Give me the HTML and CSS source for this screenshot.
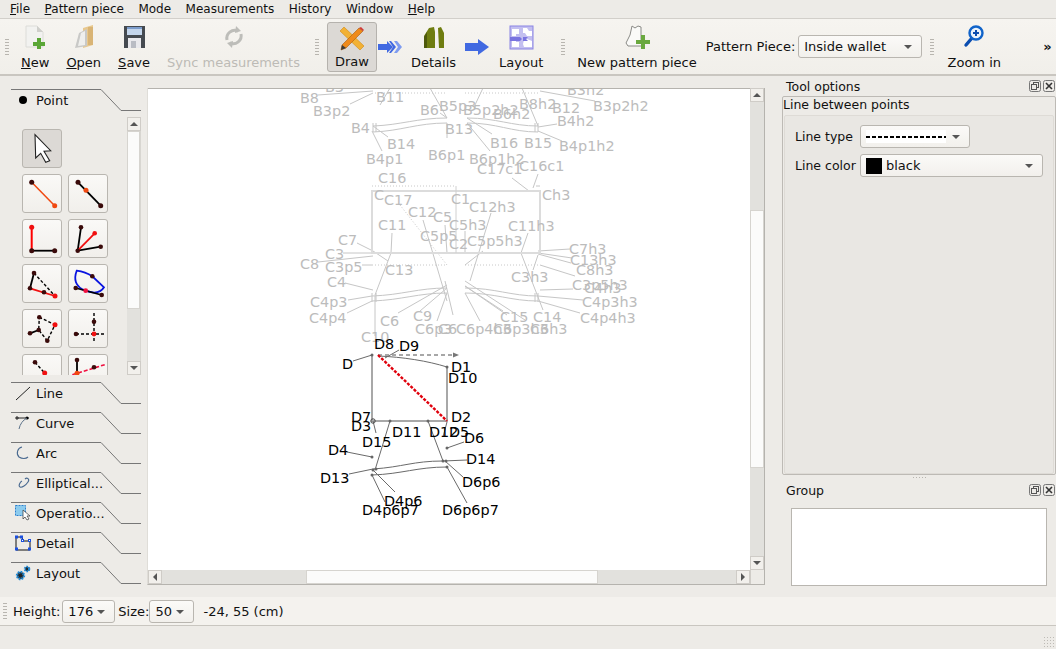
FILE: index.html
```html
<!DOCTYPE html>
<html lang="en">
<head>
    <meta charset="UTF-8">
    <title>Valentina</title>
    <link rel="stylesheet" href="styles.css">
</head>
<body>
<div class="window">
    <nav class="menubar">
        <span><u>F</u>ile</span>
        <span><u>P</u>attern piece</span>
        <span>Mode</span>
        <span>Measurements</span>
        <span>History</span>
        <span>Window</span>
        <span><u>H</u>elp</span>
    </nav>

    <header class="toolbar">
        <div class="handle"></div>
        <div class="tool-btn">
            <svg width="24" height="24" viewBox="0 0 24 24"><path d="M3 1h11l6 6v15H3z" fill="#f2f2f0" stroke="#dcdcd8"/><path d="M14 1v6h6z" fill="#cfcfcb"/><path d="M14 13h4v4h4v4h-4v3h-4v-3h-4v-4h4z" fill="#5aa636"/></svg>
            <span><u>N</u>ew</span>
        </div>
        <div class="tool-btn">
            <svg width="24" height="24" viewBox="0 0 24 24"><path d="M11 3l10-3v20l-10 3z" fill="#e8c88e"/><path d="M16 2h5v18h-5z" fill="#d9b475"/><path d="M7 8l8-4v17l-12 2z" fill="#c9c9c7"/><path d="M9 8l4-2v14l-7 1z" fill="#efefed"/></svg>
            <span><u>O</u>pen</span>
        </div>
        <div class="tool-btn">
            <svg width="24" height="24" viewBox="0 0 24 24"><rect x="2" y="1" width="21" height="22" fill="#454a50"/><rect x="5" y="2" width="15" height="8" fill="#c4d6ec"/><rect x="5" y="2" width="15" height="2" fill="#7c9ccb"/><path d="M6 13h13v10H6z" fill="#e9e9ed"/><path d="M9 16h5v7H9z" fill="#b9bcc4"/></svg>
            <span><u>S</u>ave</span>
        </div>
        <div class="tool-btn disabled">
            <svg width="24" height="24" viewBox="0 0 24 24" fill="none" stroke="#bdbdb9" stroke-width="3"><path d="M5 15a8 8 0 0 1 11-9"/><path d="M19 9a8 8 0 0 1-11 9"/><path d="M14 1l5 5-6 2z" fill="#bdbdb9" stroke="none"/><path d="M10 23l-5-5 6-2z" fill="#bdbdb9" stroke="none"/></svg>
            <span>Sync measurements</span>
        </div>
        <div class="handle handle-gap"></div>
        <div class="tool-btn active">
            <svg width="26" height="25" viewBox="0 0 26 25"><path d="M1 5l4-4 20 19-4 4z" fill="#f2b134" stroke="#d08a18" stroke-width=".6"/><path d="M20 2l4 3L7 22l-5 2 1-5z" fill="#ef8a1a" stroke="#a85c10" stroke-width=".6"/><path d="M20 2l4 3 1-1-3-3z" fill="#d03838"/><path d="M3 19l4 3-5 2z" fill="#3a3a3a"/></svg>
            <span>Draw</span>
        </div>
        <svg class="flow-arrow first-arrow" width="24" height="12" viewBox="0 0 24 12"><path d="M0 3h9V0l6 6-6 6V9H0z" fill="#4169e1"/><path d="M11 0h2l5 6-5 6h-2l4-6z" fill="#4169e1"/><path d="M16 0h3l5 6-5 6h-3l4-6z" fill="#7f9cf0"/></svg>
        <div class="tool-btn">
            <svg width="24" height="24" viewBox="0 0 24 24"><path d="M2 23V11l5-8 5-1 1 5v16z" fill="#6f7d10"/><path d="M16 3l3-1 3 6v15h-5z" fill="#6f7d10"/><path d="M2 23V12l3-5v16z" fill="#4d590c"/></svg>
            <span>Details</span>
        </div>
        <svg class="flow-arrow" width="24" height="16" viewBox="0 0 24 16"><path d="M0 4h13V0l11 8-11 8v-4H0z" fill="#4169e1"/></svg>
        <div class="tool-btn">
            <svg width="25" height="25" viewBox="0 0 25 25"><rect x="1" y="1" width="23" height="23" fill="#c3bff0" stroke="#8a84e4"/><path d="M3 4h7v5H7v2H3zM14 3h4l2 3h3v5h-5l-2-3h-2zM3 15h4v2h3v5H3zM15 15l3-1 5 2v6h-8l-1-3z" fill="#fff"/><path d="M1 12h10l2 2-2 2H1zM14 12h5l-2 2 2 2h-5z" fill="#7a74e0"/></svg>
            <span>Layout</span>
        </div>
        <div class="handle handle-gap-s"></div>
        <div class="tool-btn wide">
            <svg width="26" height="25" viewBox="0 0 26 25"><path d="M8 1l3 2 3-2 3 1v12l1 7H4l-2-3 4-8z" fill="#fafaf8" stroke="#8a8a86"/><path d="M17 10h4v5h5v4h-5v5h-4v-5h-5v-4h5z" fill="#6aa83e"/></svg>
            <span>New pattern piece</span>
        </div>
        <label class="piece-label">Pattern Piece:</label>
        <div class="combo piece-combo"><span>Inside wallet</span><i class="caret"></i></div>
        <div class="handle handle-gap-xs"></div>
        <div class="tool-btn zoom-btn">
            <svg width="24" height="24" viewBox="0 0 24 24"><path d="M10 13l-6 7" stroke="#0b4db0" stroke-width="3.4" stroke-linecap="round"/><circle cx="14" cy="8" r="6.5" fill="#eaf2fb" stroke="#1063c9" stroke-width="2.4"/><path d="M11 8h6M14 5v6" stroke="#0b4db0" stroke-width="2"/></svg>
            <span>Zoom in</span>
        </div>
        <span class="more">»</span>
    </header>

    <main class="main">
        <aside class="toolbox">
            <div class="tab open">
                <svg class="notch" width="130" height="22" viewBox="0 0 130 22"><path d="M0 .5h90l20 21h20"/></svg>
                <svg class="tab-icon" width="16" height="16" viewBox="0 0 16 16"><circle cx="8" cy="8" r="4" fill="#000"/></svg>
                <span>Point</span>
            </div>
            <div class="tools">
                <div class="tool-grid">
                    <div class="tool selected">
                        <svg width="38" height="37" viewBox="0 0 38 37"><path d="M12 4.700L27.700 20.700 21 21.300 26.700 30.700 22.700 32.300 17.700 23.300 12.700 28z" fill="#fff" stroke="#222" stroke-width="1.100"/></svg>
                    </div>
                    <div class="tool-spacer"></div>
                    <div class="tool">
                        <svg width="38" height="37" viewBox="0 0 38 37"><path d="M8.700 7.300l23 23.400" stroke="#f04810" stroke-width="1.500"/><circle cx="8.700" cy="7.300" r="2.500" fill="#3a0a0a"/><circle cx="31.700" cy="30.700" r="2.500" fill="#f04810"/></svg>
                    </div>
                    <div class="tool">
                        <svg width="38" height="37" viewBox="0 0 38 37"><path d="M9 7.300l22.700 23.400" stroke="#000" stroke-width="1.800"/><circle cx="9" cy="7.300" r="2.500" fill="#3a0a0a"/><circle cx="17" cy="15.300" r="2.500" fill="#f04810"/><circle cx="31.700" cy="30.700" r="2.500" fill="#3a0a0a"/></svg>
                    </div>
                    <div class="tool">
                        <svg width="38" height="37" viewBox="0 0 38 37"><path d="M8.700 30.700h23" stroke="#000" stroke-width="1.800"/><path d="M8.700 30.700V7.300" stroke="#f00" stroke-width="2"/><circle cx="8.700" cy="7.300" r="2.500" fill="#f01010"/><circle cx="8.700" cy="30.700" r="2.500" fill="#3a0a0a"/><circle cx="31.700" cy="30.700" r="2.500" fill="#3a0a0a"/></svg>
                    </div>
                    <div class="tool">
                        <svg width="38" height="37" viewBox="0 0 38 37"><path d="M8.700 30.700L12 7.300M8.700 30.700l23-4" stroke="#000" stroke-width="1.800"/><path d="M8.700 30.700l17-17.400" stroke="#f01010" stroke-width="1.800"/><circle cx="12" cy="7.300" r="2.300" fill="#3a0a0a"/><circle cx="25.700" cy="13.300" r="2.300" fill="#f01010"/><circle cx="31.700" cy="26.700" r="2.300" fill="#3a0a0a"/><circle cx="8.700" cy="30.700" r="2.300" fill="#3a0a0a"/></svg>
                    </div>
                    <div class="tool">
                        <svg width="38" height="37" viewBox="0 0 38 37"><path d="M11 8L7 23.300" stroke="#000" stroke-width="1.800"/><path d="M11 8l21 23" stroke="#000" stroke-width="1.400" stroke-dasharray="3 2"/><path d="M7 23.300L32 31" stroke="#f01010" stroke-width="1.800"/><circle cx="11" cy="8" r="2.300" fill="#3a0a0a"/><circle cx="7" cy="23.300" r="2.300" fill="#3a0a0a"/><circle cx="21" cy="27.300" r="2.300" fill="#3a0a0a"/><circle cx="32" cy="31" r="2.500" fill="#f01010"/></svg>
                    </div>
                    <div class="tool">
                        <svg width="38" height="37" viewBox="0 0 38 37"><path d="M7.700 5.700c-3 8-2 16 9 20 8 3 15 2 18.300-3.400L23.300 11.300C18 8 13 6.500 7.700 5.700z" fill="none" stroke="#0a14e0" stroke-width="1.800"/><path d="M6.700 23l26 7" stroke="#000" stroke-width="1.800"/><circle cx="23.300" cy="11.300" r="2.300" fill="#3a0a0a"/><circle cx="6.700" cy="23" r="2.300" fill="#3a0a0a"/><circle cx="16.700" cy="25.700" r="2.400" fill="#f01040"/><circle cx="32.700" cy="30" r="2.300" fill="#3a0a0a"/></svg>
                    </div>
                    <div class="tool">
                        <svg width="38" height="37" viewBox="0 0 38 37"><path d="M7 23.300L15.700 20" stroke="#000" stroke-width="1.800"/><path d="M16.300 7.300L32 14.700 24.300 30.700 15.700 20z" fill="none" stroke="#000" stroke-width="1.400" stroke-dasharray="3 2"/><circle cx="16.300" cy="7.300" r="2.300" fill="#3a0a0a"/><circle cx="7" cy="23.300" r="2.300" fill="#3a0a0a"/><circle cx="15.700" cy="20" r="2.300" fill="#3a0a0a"/><circle cx="32" cy="14.700" r="2.500" fill="#f01010"/><circle cx="24.300" cy="30.700" r="2.300" fill="#3a0a0a"/></svg>
                    </div>
                    <div class="tool">
                        <svg width="38" height="37" viewBox="0 0 38 37"><path d="M25 3v30M7 24h28" stroke="#000" stroke-width="1.400" stroke-dasharray="3 2"/><circle cx="25" cy="11.700" r="2.300" fill="#3a0a0a"/><circle cx="7" cy="24" r="2.300" fill="#3a0a0a"/><circle cx="25" cy="24" r="2.400" fill="#f01010"/></svg>
                    </div>
                    <div class="tool">
                        <svg width="38" height="37" viewBox="0 0 38 37"><path d="M12 7.300l10 11" stroke="#000" stroke-width="1.400" stroke-dasharray="3 2"/><circle cx="12" cy="7.300" r="2.300" fill="#3a0a0a"/><circle cx="21.700" cy="18" r="2.500" fill="#f01010"/><circle cx="15" cy="22" r="2" fill="#f01010"/></svg>
                    </div>
                    <div class="tool">
                        <svg width="38" height="37" viewBox="0 0 38 37"><path d="M8 5v13.300" stroke="#000" stroke-width="1.800"/><path d="M3.300 19.700l32.400-10" stroke="#f01040" stroke-width="1.600" stroke-dasharray="4 2"/><circle cx="8" cy="5" r="2.300" fill="#3a0a0a"/><circle cx="25" cy="12.300" r="2.300" fill="#3a0a0a"/><circle cx="8" cy="18.300" r="2.500" fill="#f04810"/></svg>
                    </div>
                </div>
                <div class="vscroll small-scroll">
                    <div class="arrow-btn"><i class="tri up"></i></div>
                    <div class="thumb toolbox-thumb"></div>
                    <div class="track"></div>
                    <div class="arrow-btn"><i class="tri down"></i></div>
                </div>
            </div>
            <div class="tab">
                <svg class="notch" width="130" height="22" viewBox="0 0 130 22"><path d="M0 .5h90l20 21h20"/></svg>
                <svg class="tab-icon" width="16" height="16" viewBox="0 0 16 16"><path d="M1 15L15 2" stroke="#222" fill="none"/></svg>
                <span>Line</span>
            </div>
            <div class="tab">
                <svg class="notch" width="130" height="22" viewBox="0 0 130 22"><path d="M0 .5h90l20 21h20"/></svg>
                <svg class="tab-icon" width="16" height="16" viewBox="0 0 16 16"><path d="M1 3h13" stroke="#222" fill="none"/><circle cx="2" cy="3" r="1.200" fill="none" stroke="#222"/><circle cx="12" cy="3" r="1.500"/><path d="M4 14C5 9 8 5 12 3" stroke="#5a7088" fill="none"/></svg>
                <span>Curve</span>
            </div>
            <div class="tab">
                <svg class="notch" width="130" height="22" viewBox="0 0 130 22"><path d="M0 .5h90l20 21h20"/></svg>
                <svg class="tab-icon" width="16" height="16" viewBox="0 0 16 16"><path d="M7 2A6 6 0 0 0 4 12c3 2 7 2 9 0" stroke="#4a6a90" stroke-width="1.100" fill="none"/></svg>
                <span>Arc</span>
            </div>
            <div class="tab">
                <svg class="notch" width="130" height="22" viewBox="0 0 130 22"><path d="M0 .5h90l20 21h20"/></svg>
                <svg class="tab-icon" width="16" height="16" viewBox="0 0 16 16"><path d="M10 4c2-2 5 0 3 3-2 3-6 6-8 5s0-5 2-6" stroke="#4a6a90" stroke-width="1.100" fill="none"/></svg>
                <span>Elliptical...</span>
            </div>
            <div class="tab">
                <svg class="notch" width="130" height="22" viewBox="0 0 130 22"><path d="M0 .5h90l20 21h20"/></svg>
                <svg class="tab-icon" width="16" height="16" viewBox="0 0 16 16"><rect x=".5" y=".5" width="10" height="10" fill="#8ccbee" stroke="#2a80d0" stroke-dasharray="2 1"/><path d="M8 5v9l2-2 2 3 2-1-2-3h3z" fill="#fff" stroke="#333" stroke-width=".7"/></svg>
                <span>Operatio...</span>
            </div>
            <div class="tab">
                <svg class="notch" width="130" height="22" viewBox="0 0 130 22"><path d="M0 .5h90l20 21h20"/></svg>
                <svg class="tab-icon" width="16" height="16" viewBox="0 0 16 16"><path d="M1 2h6l1 4h7v9H1z" fill="none" stroke="#111"/><g fill="#fff" stroke="#1a50e0"><rect x=".5" y="1" width="2" height="2"/><rect x="5.500" y="1" width="2" height="2"/><rect x="6.500" y="4.500" width="2" height="2"/><rect x="13.500" y="4.500" width="2" height="2"/><rect x="13.500" y="13" width="2" height="2"/><rect x=".5" y="13" width="2" height="2"/></g></svg>
                <span>Detail</span>
            </div>
            <div class="tab">
                <svg class="notch" width="130" height="22" viewBox="0 0 130 22"><path d="M0 .5h90l20 21h20"/></svg>
                <svg class="tab-icon" width="16" height="16" viewBox="0 0 16 16"><circle cx="5.500" cy="10.500" r="3.400" fill="#222" stroke="#1c8ad8" stroke-width="2.600" stroke-dasharray="1.600 1"/><circle cx="12" cy="4" r="2.200" fill="#222" stroke="#1c8ad8" stroke-width="2.200" stroke-dasharray="1.400 .8"/></svg>
                <span>Layout</span>
            </div>
        </aside>

        <section class="scene">
            <div class="scene-row">
                <div class="canvas">
                    <svg class="drawing" width="602" height="482" viewBox="148 88 602 482">
                        <g class="old-lines">
                            <path d="M318 95l55-4M350 104l23-11M380 105l10-17M388 137l-15-11M382 151l-10-20M440 113l7 5M447 138v-15M430 88l17 30M492 134l-25-16M490 151l-23-28M538 126l-16-38M557 124l-19 3M562 141l-24-10M595 101l-55-10M483 88l-8 17"/>
                            <path d="M373 126c28-1 44-8 74-8M373 132c28-1 44-9 74-9M467 118c30 0 44 8 71 8M467 123c30 0 44 9 71 9M373 123v9M376 123v9M535 123v9M538 123v9"/>
                            <path d="M512 178l17 13M538 174l-5 14M536 186h4"/>
                            <path d="M357 243l16 8M343 253h29M318 262l55-6M362 265h10M388 261l-15-10M392 233l-1 20M375 336v-40M375 295l16-42M345 283l28 7M348 300l24-4M347 313l25-12M423 220l24 81M445 225l2 28M465 231v22M483 251l-18 14M491 213l-21 68M528 233l-7 20M521 253l22 57M538 255l-5 15M570 249l-32 2M572 258l-34-5M571 263l-33-9M575 276l-35-11M573 289l-33 1M583 300l-45-4M580 313l-42-12M398 313l49-28M420 311l27-23M437 321l10-28M453 315l-8-34M480 321l-15-28M507 315l-42-29M525 320l-60-39M503 311l-38-25"/>
                            <path d="M372 296c30-1 46-8 75-8M372 301c30-1 46-8 75-8M465 288c30 0 46 8 73 8M465 293c30 0 46 8 73 8M372 293v9M376 293v9M535 293v9M538 293v9"/>
                        </g>
                        <g class="old-dots">
                            <path d="M375 93h72M465 93h73M372 186h84M400 205l47 60M372 265h75M465 265h75"/>
                        </g>
                        <path class="old-rect" d="M372 191h168v62H372z"/>
                        <path class="old-mid" d="M456 186v67"/>
                        <g class="old-labels">
                            <text x="325" y="92">B3</text><text x="300" y="103">B8</text><text x="313" y="116">B3p2</text><text x="376" y="102">B11</text><text x="420" y="115">B6</text><text x="439" y="111">B5p3</text><text x="463" y="115">B5p2h2</text><text x="493" y="119">B6h2</text><text x="519" y="109">B8h2</text><text x="552" y="113">B12</text><text x="593" y="111">B3p2h2</text><text x="567" y="95">B3h2</text>
                            <text x="351" y="133">B4</text><text x="445" y="134">B13</text><text x="557" y="126">B4h2</text><text x="387" y="149">B14</text><text x="428" y="160">B6p1</text><text x="490" y="148">B16</text><text x="524" y="148">B15</text><text x="559" y="151">B4p1h2</text><text x="366" y="164">B4p1</text><text x="469" y="164">B6p1h2</text>
                            <text x="477" y="174">C17c1</text><text x="519" y="171">C16c1</text><text x="378" y="183">C16</text><text x="542" y="200">Ch3</text><text x="374" y="200">C</text><text x="384" y="205">C17</text><text x="408" y="217">C12</text><text x="433" y="222">C5</text><text x="451" y="204">C1</text><text x="469" y="212">C12h3</text>
                            <text x="449" y="230">C5h3</text><text x="378" y="230">C11</text><text x="508" y="231">C11h3</text><text x="420" y="241">C5p5</text><text x="449" y="249">C2</text><text x="467" y="246">C5p5h3</text><text x="338" y="245">C7</text><text x="325" y="259">C3</text><text x="300" y="269">C8</text><text x="325" y="272">C3p5</text><text x="385" y="275">C13</text>
                            <text x="569" y="254">C7h3</text><text x="570" y="265">C13h3</text><text x="576" y="275">C8h3</text><text x="511" y="282">C3h3</text><text x="572" y="290">C3p5h3</text><text x="584" y="293">C4h3</text><text x="327" y="287">C4</text><text x="310" y="307">C4p3</text><text x="582" y="307">C4p3h3</text><text x="309" y="323">C4p4</text><text x="580" y="323">C4p4h3</text>
                            <text x="380" y="326">C6</text><text x="413" y="321">C9</text><text x="500" y="322">C15</text><text x="533" y="322">C14</text><text x="415" y="334">C6p3</text><text x="438" y="334">C6</text><text x="456" y="334">C6p4h3</text><text x="493" y="334">C6p3h3</text><text x="530" y="334">C6h3</text><text x="361" y="342">C10</text>
                        </g>
                        <g class="new-thick"><path d="M372 355v66h75v-54"/></g>
                        <g class="new-lines">
                            <path d="M353 361l19-6M378 356c25 1 50 5 69 11M385 358l14-8"/>
                            <path d="M390 421l-15 49M428 421l15 40M373 421l3 12M464 442l-17 6M347 452l25 5M467 460l-24 1M349 474l24-5M463 477l-18-16M395 492l-22-22M385 502l-13-27M467 503l-20-36M443 437l4-15"/>
                            <path d="M373 469c30-2 40-8 70-8M372 475c30-1 45-8 75-8"/>
                            <circle cx="373" cy="421" r="2.200" class="ring"/><circle cx="372" cy="355" r="1.500"/><circle cx="447" cy="367" r="1.500"/><circle cx="390" cy="421" r="1.500"/><circle cx="428" cy="421" r="1.500"/><circle cx="443" cy="461" r="1.500"/><circle cx="446" cy="461" r="1.500"/><circle cx="373" cy="470" r="1.500"/><circle cx="376" cy="469" r="1.500"/><circle cx="372" cy="475" r="1.500"/><circle cx="447" cy="467" r="1.500"/><circle cx="372" cy="457" r="1.500"/><circle cx="447" cy="448" r="1.500"/>
                        </g>
                        <path class="new-dash" d="M378 355h76"/>
                        <path class="arrow-head" d="M459 355l-6-2.500v5z"/>
                        <path class="new-red" d="M378 355l69 66"/>
                        <g class="new-labels">
                            <text x="374" y="349">D8</text><text x="399" y="351">D9</text><text x="342" y="369">D</text><text x="451" y="372">D1</text><text x="448" y="383">D10</text><text x="351" y="422">D7</text><text x="351" y="431">D3</text><text x="451" y="422">D2</text><text x="392" y="437">D11</text><text x="429" y="437">D12</text><text x="449" y="437">D5</text><text x="464" y="443">D6</text><text x="362" y="447">D15</text><text x="328" y="455">D4</text><text x="466" y="464">D14</text><text x="320" y="483">D13</text><text x="462" y="487">D6p6</text><text x="384" y="506">D4p6</text><text x="362" y="515">D4p6p7</text><text x="442" y="515">D6p6p7</text>
                        </g>
                    </svg>
                </div>
                <div class="vscroll main-v">
                    <div class="arrow-btn"><i class="tri up"></i></div>
                    <div class="track v-before"></div>
                    <div class="thumb v-thumb"></div>
                    <div class="track"></div>
                    <div class="arrow-btn"><i class="tri down"></i></div>
                </div>
            </div>
            <div class="hscroll">
                <div class="arrow-btn"><i class="tri left"></i></div>
                <div class="track h-before"></div>
                <div class="thumb h-thumb"></div>
                <div class="track"></div>
                <div class="arrow-btn"><i class="tri right"></i></div>
                <div class="corner"></div>
            </div>
        </section>

        <aside class="docks">
            <div class="dock-title">
                <span>Tool options</span>
                <div class="dock-btns">
                    <svg width="12" height="12" viewBox="0 0 12 12"><rect x=".5" y=".5" width="11" height="11" rx="2" fill="none" stroke="#777"/><rect x="4.500" y="2.500" width="5" height="5" fill="none" stroke="#555"/><rect x="2.500" y="4.500" width="5" height="5" fill="#edebe7" stroke="#555"/></svg>
                    <svg width="12" height="12" viewBox="0 0 12 12"><rect x=".5" y=".5" width="11" height="11" rx="2" fill="none" stroke="#777"/><path d="M3 3l6 6M9 3l-6 6" stroke="#333" stroke-width="1.600"/></svg>
                </div>
            </div>
            <div class="options-frame">
                <div class="options-title">Line between points</div>
                <div class="options-body">
                    <div class="form-row">
                        <label>Line type</label>
                        <div class="combo type-combo"><span class="dash-sample"></span><i class="caret"></i></div>
                    </div>
                    <div class="form-row">
                        <label>Line color</label>
                        <div class="combo color-combo"><span class="swatch"></span><span>black</span><i class="caret"></i></div>
                    </div>
                </div>
            </div>
            <div class="dock-grip"></div>
            <div class="dock-title group-title">
                <span>Group</span>
                <div class="dock-btns">
                    <svg width="12" height="12" viewBox="0 0 12 12"><rect x=".5" y=".5" width="11" height="11" rx="2" fill="none" stroke="#777"/><rect x="4.500" y="2.500" width="5" height="5" fill="none" stroke="#555"/><rect x="2.500" y="4.500" width="5" height="5" fill="#edebe7" stroke="#555"/></svg>
                    <svg width="12" height="12" viewBox="0 0 12 12"><rect x=".5" y=".5" width="11" height="11" rx="2" fill="none" stroke="#777"/><path d="M3 3l6 6M9 3l-6 6" stroke="#333" stroke-width="1.600"/></svg>
                </div>
            </div>
            <div class="group-list"></div>
        </aside>
    </main>

    <div class="size-bar">
        <div class="handle size-handle"></div>
        <span>Height:</span>
        <div class="combo height-combo"><span>176</span><i class="caret"></i></div>
        <span>Size:</span>
        <div class="combo size-combo"><span>50</span><i class="caret"></i></div>
        <span class="coords">-24, 55 (cm)</span>
    </div>
    <footer class="statusbar"><div class="size-grip"></div></footer>
</div>
</body>
</html>
```

FILE: styles.css
```css
* {
    box-sizing: border-box;
}
html, body {
    margin: 0;
    padding: 0;
}
body {
    width: 1056px;
    height: 649px;
    overflow: hidden;
    background-color: #edebe7;
    color: #111;
    font-family: "DejaVu Sans", sans-serif;
    font-size: 13px;
}
.window {
    display: flex;
    flex-direction: column;
    height: 649px;
}

/* menu */
.menubar {
    display: flex;
    gap: 14.5px;
    height: 19px;
    padding-left: 10px;
    align-items: center;
    border-bottom: 1px solid #d2cfca;
    font-size: 12px;
}

/* main toolbar */
.toolbar {
    display: flex;
    height: 57px;
    align-items: center;
    padding-left: 5px;
    background: linear-gradient(#f6f4f0, #f1efea);
    border-bottom: 2px solid #c9c6c0;
}
.handle {
    width: 4px;
    height: 18px;
    flex: none;
    background-image: radial-gradient(#b8b5af 0.7px, transparent 0.8px);
    background-size: 2px 3px;
}
.handle-gap {
    margin: 0 8px 0 7px;
}
.handle-gap-s {
    margin: 0 0 0 10px;
}
.handle-gap-xs {
    margin: 0 5px 0 8px;
}
.tool-btn {
    display: flex;
    flex-direction: column;
    align-items: center;
    justify-content: space-between;
    height: 50px;
    padding: 3px 8px 2px;
    margin-left: 1px;
    flex: none;
}
.tool-btn svg {
    flex: none;
}
.toolbar > .handle + .tool-btn {
    margin-left: 4px;
}
.tool-btn.disabled {
    color: #bdbbb6;
}
.tool-btn.active {
    width: 50px;
    padding-left: 0;
    padding-right: 0;
    margin-left: 0 !important;
    background-color: #dcd9d5;
    border: 1px solid #b5b2ad;
    border-radius: 3px;
}
.flow-arrow {
    flex: none;
    margin: 0 1px;
}
.first-arrow {
    margin-right: 0;
}
.piece-label {
    margin: 0 3px 0 1px;
    white-space: nowrap;
}
.combo {
    display: flex;
    align-items: center;
    position: relative;
    height: 23px;
    padding-left: 5px;
    background: linear-gradient(#fbfaf8, #f2f0ec);
    border: 1px solid #b9b6b0;
    border-radius: 3px;
    flex: none;
}
.caret {
    position: absolute;
    right: 9px;
    top: 9px;
    width: 0;
    height: 0;
    border-left: 4px solid transparent;
    border-right: 4px solid transparent;
    border-top: 4px solid #555;
}
.piece-combo {
    width: 124px;
}
.zoom-btn {
    width: 70px;
    padding-left: 0;
    padding-right: 0;
    margin-left: 0 !important;
}
.more {
    margin-left: 34px;
    font-size: 13px;
    font-weight: bold;
}

/* left toolbox */
.main {
    display: flex;
    height: 521px;
    flex: none;
}
.toolbox {
    width: 147px;
    flex: none;
    padding: 13px 6px 0 11px;
}
.tab {
    position: relative;
    display: flex;
    align-items: center;
    height: 30px;
    padding: 0 0 8px 4px;
    gap: 5px;
}
.tab.open {
    height: 28px;
    padding-bottom: 6px;
}
.notch {
    position: absolute;
    left: 0;
    top: 0;
    fill: none;
    stroke: #777;
}
.tab-icon {
    flex: none;
}
.tools {
    display: flex;
    height: 258px;
    margin-bottom: 7px;
    overflow: hidden;
}
.tool-grid {
    display: grid;
    grid-template-columns: 40px 40px;
    grid-auto-rows: 39px;
    gap: 6px;
    width: 116px;
    height: 258px;
    padding: 12px 0 0 11px;
    overflow: hidden;
}
.tool {
    display: flex;
    background: linear-gradient(#faf9f7, #f1efeb);
    border: 1px solid #b9b6b0;
    border-radius: 3px;
}
.tool svg {
    flex: none;
}
.tool.selected {
    background: #dcd9d5;
}

/* scrollbars */
.vscroll {
    display: flex;
    flex-direction: column;
    width: 14px;
    flex: none;
}
.small-scroll {
    border-right: 1px solid #d8d6d1;
}
.arrow-btn {
    display: flex;
    align-items: center;
    justify-content: center;
    width: 14px;
    height: 14px;
    flex: none;
    background-color: #f2f0ec;
    border: 1px solid #cfccc7;
}
.track {
    flex: 1;
    background-color: #e2e1dd;
}
.thumb {
    flex: none;
    background-color: #fbfbfa;
    border: 1px solid #d6d4cf;
}
.toolbox-thumb {
    height: 178px;
}
.tri {
    width: 0;
    height: 0;
    border: 4px solid transparent;
}
.tri.up {
    border-top: 0;
    border-bottom: 4px solid #555;
}
.tri.down {
    border-bottom: 0;
    border-top: 4px solid #555;
}
.tri.left {
    border-left: 0;
    border-right: 4px solid #555;
}
.tri.right {
    border-right: 0;
    border-left: 4px solid #555;
}

/* drawing area */
.scene {
    display: flex;
    flex-direction: column;
    width: 618px;
    height: 497px;
    margin-top: 12px;
    flex: none;
    border-right: 1px solid #b5b3ae;
    border-bottom: 1px solid #b5b3ae;
    border-left: 1px solid #dfddd8;
}
.scene-row {
    display: flex;
    height: 482px;
}
.canvas {
    width: 602px;
    height: 482px;
    background-color: #fff;
    border-top: 1px solid #b5b3ae;
    overflow: hidden;
}
.drawing {
    display: block;
    margin-top: -1px;
    font-family: "DejaVu Sans", sans-serif;
    font-size: 14.4px;
}
.old-lines path {
    fill: none;
    stroke: #c6c6c6;
    stroke-width: 1;
}
.old-dots path {
    fill: none;
    stroke: #c8c8c8;
    stroke-width: 1;
    stroke-dasharray: 1 2;
}
.old-rect {
    fill: none;
    stroke: #dcdcdc;
    stroke-width: 2;
}
.old-mid {
    fill: none;
    stroke: #d0d0d0;
    stroke-width: 1;
}
.old-labels {
    fill: #bcbcbc;
}
.new-thick path {
    fill: none;
    stroke: #a8a8a8;
    stroke-width: 2;
}
.new-lines path {
    fill: none;
    stroke: #6a6a6a;
    stroke-width: 1;
}
.new-lines circle {
    fill: #666;
}
.new-lines .ring {
    fill: none;
    stroke: #444;
}
.new-dash {
    fill: none;
    stroke: #8a8a8a;
    stroke-width: 1.3;
    stroke-dasharray: 4 3;
}
.arrow-head {
    fill: #777;
}
.new-red {
    fill: none;
    stroke: #e0000c;
    stroke-width: 2.4;
    stroke-dasharray: 3 1.5;
}
.new-labels {
    fill: #000;
}
.main-v {
    height: 482px;
}
.v-before {
    flex: none;
    height: 108px;
}
.v-thumb {
    height: 258px;
}
.hscroll {
    display: flex;
    height: 14px;
}
.h-before {
    flex: none;
    width: 144px;
}
.h-thumb {
    width: 292px;
}
.corner {
    width: 14px;
    flex: none;
    background-color: #edebe7;
    border-left: 1px solid #cfccc7;
}

/* right docks */
.docks {
    width: 274px;
    margin-left: 17px;
    flex: none;
    display: flex;
    flex-direction: column;
}
.dock-title {
    display: flex;
    justify-content: space-between;
    align-items: center;
    height: 20px;
    padding: 0 1px 0 4px;
    font-size: 12.5px;
}
.options-frame {
    height: 379px;
    border: 1px solid #bdbab5;
    border-radius: 2px;
    display: flex;
    flex-direction: column;
}
.dock-btns {
    display: flex;
    gap: 2px;
}
.options-title {
    height: 18px;
    line-height: 16px;
    font-size: 12.5px;
}
.options-body {
    flex: 1;
    margin: 0 1px;
    padding: 9px 0 0 10px;
    background-color: #e9e7e3;
    border: 1px solid #dedbd6;
    border-radius: 2px;
}
.form-row {
    display: flex;
    align-items: center;
    margin-bottom: 6px;
}
.form-row label {
    width: 65px;
    flex: none;
    font-size: 12.5px;
}
.type-combo {
    width: 110px;
}
.dash-sample {
    display: block;
    width: 80px;
    height: 13px;
    background: #fff linear-gradient(90deg, #000 60%, transparent 60%) 0 50% / 6px 2px repeat-x;
}
.color-combo {
    width: 183px;
    gap: 4px;
}
.swatch {
    width: 16px;
    height: 16px;
    background-color: #000;
}
.dock-grip {
    height: 4px;
    margin: 1px auto 0;
    width: 14px;
    background-image: radial-gradient(#b8b5af 0.6px, transparent 0.7px);
    background-size: 3px 3px;
}
.group-list {
    width: 256px;
    height: 78px;
    margin: 8px 0 0 9px;
    background-color: #fff;
    border: 1px solid #b9b6b0;
}

/* bottom bars */
.size-bar {
    display: flex;
    align-items: center;
    height: 29px;
    flex: none;
    padding-left: 3px;
    background-color: #f4f2ee;
    border-bottom: 1px solid #c9c6c0;
}
.size-handle {
    margin-right: 6px;
}
.height-combo {
    width: 53px;
    margin: 0 3px 0 2px;
}
.size-combo {
    width: 45px;
    margin: 0 9px 0 0;
}
.statusbar {
    flex: 1;
    position: relative;
}
.size-grip {
    position: absolute;
    right: 1px;
    bottom: 1px;
    width: 12px;
    height: 12px;
    background-image: radial-gradient(#bdbab5 0.7px, transparent 0.8px);
    background-size: 3px 3px;
}
```
